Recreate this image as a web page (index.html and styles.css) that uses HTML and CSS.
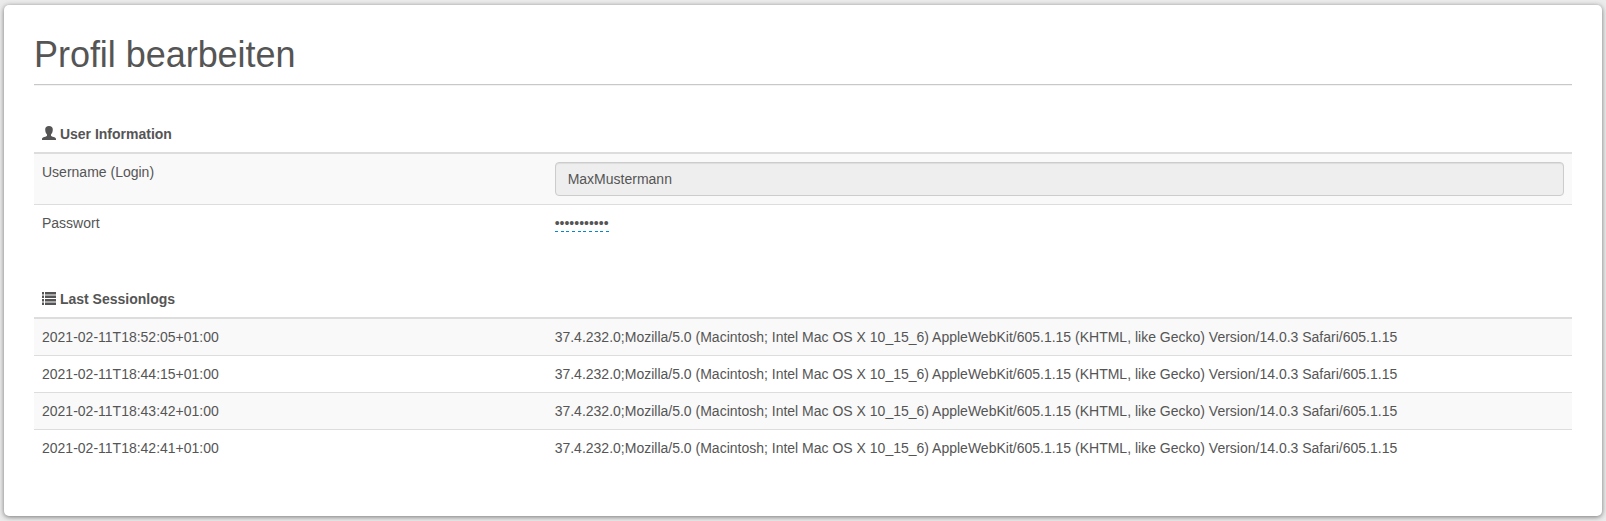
FILE: index.html
```html
<!DOCTYPE html>
<html lang="de">
<head>
<meta charset="utf-8">
<title>Profil bearbeiten</title>
<link rel="stylesheet" href="styles.css">
</head>
<body>
<main class="panel">
  <h1 class="page-title">Profil bearbeiten</h1>
  <table class="table">
    <colgroup><col class="col-label"><col></colgroup>
    <thead>
      <tr><th colspan="2"><svg class="icon" viewBox="0 0 14 14"><path d="M7 0C4.500 0 3.200 1.200 3.200 3.600c0 2 .7 4 1.800 5v1.200C4.600 10.800 0 10.900 0 12.900V14h14v-1.100c0-2-4.600-2.100-5-3.100V8.600c1.100-1 1.800-3 1.800-5C10.800 1.200 9.500 0 7 0z"/></svg> User Information</th></tr>
    </thead>
    <tbody>
      <tr><td>Username (Login)</td><td><input class="field" type="text" value="MaxMustermann" disabled></td></tr>
      <tr><td>Passwort</td><td><a class="editable">•••••••••••</a></td></tr>
    </tbody>
  </table>
  <table class="table">
    <colgroup><col class="col-label"><col></colgroup>
    <thead>
      <tr><th colspan="2"><svg class="icon" viewBox="0 0 14 14"><path transform="translate(0 .6)" d="M0 .5h2V3H0zM3 .5H14V3H3zM0 4h2v2.500H0zM3 4H14v2.500H3zM0 7.500h2V10H0zM3 7.500H14V10H3zM0 11h2v2.500H0zM3 11H14v2.500H3z"/></svg> Last Sessionlogs</th></tr>
    </thead>
    <tbody>
      <tr><td>2021-02-11T18:52:05+01:00</td><td>37.4.232.0;Mozilla/5.0 (Macintosh; Intel Mac OS X 10_15_6) AppleWebKit/605.1.15 (KHTML, like Gecko) Version/14.0.3 Safari/605.1.15</td></tr>
      <tr><td>2021-02-11T18:44:15+01:00</td><td>37.4.232.0;Mozilla/5.0 (Macintosh; Intel Mac OS X 10_15_6) AppleWebKit/605.1.15 (KHTML, like Gecko) Version/14.0.3 Safari/605.1.15</td></tr>
      <tr><td>2021-02-11T18:43:42+01:00</td><td>37.4.232.0;Mozilla/5.0 (Macintosh; Intel Mac OS X 10_15_6) AppleWebKit/605.1.15 (KHTML, like Gecko) Version/14.0.3 Safari/605.1.15</td></tr>
      <tr><td>2021-02-11T18:42:41+01:00</td><td>37.4.232.0;Mozilla/5.0 (Macintosh; Intel Mac OS X 10_15_6) AppleWebKit/605.1.15 (KHTML, like Gecko) Version/14.0.3 Safari/605.1.15</td></tr>
    </tbody>
  </table>
</main>
</body>
</html>
```
FILE: styles.css
```css
* { box-sizing: border-box; }

body {
  margin: 0;
  padding: 5px 4px;
  height: 521px;
  overflow: hidden;
  background: #ebebeb;
  color: #555;
  font: 14px/20px "Liberation Sans", Arial, sans-serif;
}

.panel {
  height: 511px;
  padding: 30px;
  background: #fff;
  border-radius: 5px;
  box-shadow: 0 1px 5px rgba(0, 0, 0, 0.5);
}

.page-title {
  height: 50px;
  margin: 0 0 31px;
  border-bottom: 1px solid #c8c8c8;
  box-shadow: 0 1px 0 #f3f3f3;
  font-size: 36px;
  font-weight: 400;
  line-height: 39px;
  letter-spacing: -0.04px;
}

.table {
  width: 100%;
  margin-bottom: 40px;
  border-spacing: 0;
  table-layout: fixed;
}

.col-label { width: 33.3333%; }

.table th,
.table td {
  padding: 8px;
  text-align: left;
  vertical-align: top;
}

.table th { border-bottom: 2px solid #ddd; }
.table tbody tr:nth-child(odd) { background: #f9f9f9; }
.table tbody tr + tr td { border-top: 1px solid #ddd; }

.icon {
  width: 14px;
  height: 14px;
  vertical-align: -1px;
  overflow: visible;
  fill: #555;
}

.field {
  display: block;
  width: 100%;
  height: 34px;
  padding: 6px 12px;
  border: 1px solid #ccc;
  border-radius: 4px;
  background: #eee;
  box-shadow: inset 0 1px 1px rgba(0, 0, 0, 0.075);
  color: #555;
  font: inherit;
}

.editable {
  padding-bottom: 1px;
  background: repeating-linear-gradient(90deg, #08c 0 3px, transparent 3px 5.67px) left bottom / 100% 1px no-repeat;
}
```
